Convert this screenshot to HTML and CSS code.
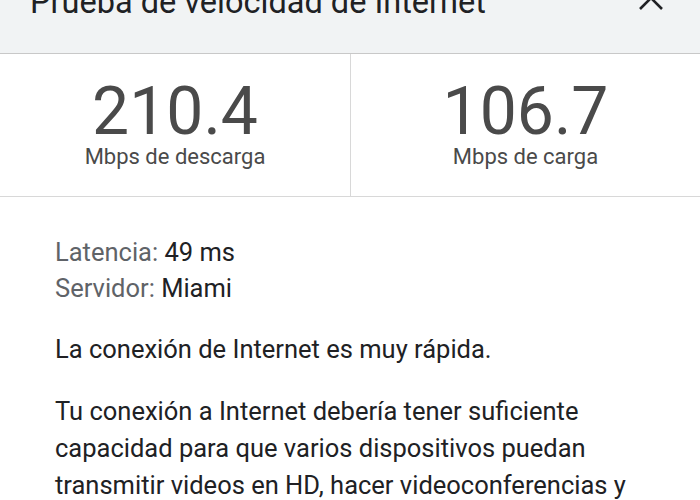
FILE: index.html
```html
<!DOCTYPE html>
<html lang="es">
<head>
  <meta charset="UTF-8">
  <meta name="viewport" content="width=device-width, initial-scale=1.0">
  <title>Prueba de velocidad</title>
  <link rel="stylesheet" href="styles.css">
</head>
<body>

  <div class="sheet">
    <header class="top-bar">
      <h1 class="title">Prueba de velocidad de Internet</h1>
      <button class="close" aria-label="Cerrar">
        <svg viewBox="0 0 26 26" width="26" height="26">
          <path d="M2 2 L24 24 M24 2 L2 24" stroke="#202124" stroke-width="2.6" fill="none"/>
        </svg>
      </button>
    </header>

    <section class="results">
      <div class="result">
        <div class="value">210.4</div>
        <div class="unit">Mbps de descarga</div>
      </div>
      <div class="result">
        <div class="value">106.7</div>
        <div class="unit">Mbps de carga</div>
      </div>
    </section>

    <section class="details">
      <p class="meta"><span class="label">Latencia:</span> 49 ms</p>
      <p class="meta"><span class="label">Servidor:</span> Miami</p>

      <p class="summary">La conexión de Internet es muy rápida.</p>

      <p class="summary">Tu conexión a Internet debería tener suficiente capacidad para que varios dispositivos puedan transmitir videos en HD, hacer videoconferencias y jugar en línea al mismo tiempo.</p>
    </section>
  </div>

</body>
</html>
```

FILE: styles.css
```css
* {
  margin: 0;
  padding: 0;
  box-sizing: border-box;
}

body, html {
  height: 100%;
  font-family: 'Roboto', 'Noto Sans', sans-serif;
  overflow: hidden;
  background-color: #fff;
  color: #202124;
}

/* the sheet is scrolled a little, so its header is cut at the top */
.sheet {
  margin-top: -40px;
}

.top-bar {
  height: 94px;
  background-color: #f1f3f4;
  border-bottom: 1px solid #c8c8c8;
  display: flex;
  justify-content: space-between;
  align-items: flex-start;
  padding: 22px 36px 0 30px;
}

.title {
  font-size: 32.5px;
  font-weight: 400;
  line-height: 40px;
}

.close {
  background: none;
  border: none;
  padding: 0;
  margin-top: 3px;
  display: flex;
}

.results {
  display: grid;
  grid-template-columns: 1fr 1fr;
  border-bottom: 1px solid #d8d8d8;
}

.result {
  height: 142px;
  display: flex;
  flex-direction: column;
  align-items: center;
  padding-top: 26px;
  color: #4a4a4a;
}

.result + .result {
  border-left: 1px solid #d8d8d8;
}

.value {
  font-size: 66px;
  line-height: 64px;
}

.unit {
  font-size: 22px;
  line-height: 26px;
}

.details {
  padding: 37px 55px 0;
}

.meta {
  font-size: 25.5px;
  line-height: 36px;
}

.label {
  color: #5f6368;
}

.summary {
  font-size: 25.5px;
  line-height: 37px;
  margin-top: 25px;
}
```
